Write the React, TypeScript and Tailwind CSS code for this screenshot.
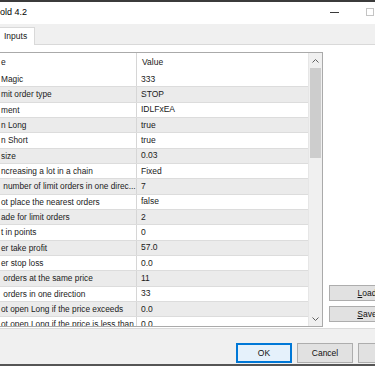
import React from "react";

const rows: [string, string][] = [
  ["Magic", "333"],
  ["mit order type", "STOP"],
  ["ment", "IDLFxEA"],
  ["n Long", "true"],
  ["n Short", "true"],
  ["size", "0.03"],
  ["ncreasing a lot in a chain", "Fixed"],
  [" number of limit orders in one direc...", "7"],
  ["ot place the nearest orders", "false"],
  ["ade for limit orders", "2"],
  ["t in points", "0"],
  ["er take profit", "57.0"],
  ["er stop loss", "0.0"],
  [" orders at the same price", "11"],
  [" orders in one direction", "33"],
  ["ot open Long if the price exceeds", "0.0"],
  ["ot open Long if the price is less than", "0.0"],
];

function Chevron({ down }: { down?: boolean }) {
  return (
    <svg width="7" height="4" viewBox="0 0 7 4">
      <polyline
        points={down ? "0.5,0.5 3.5,3.5 6.5,0.5" : "0.5,3.5 3.5,0.5 6.5,3.5"}
        fill="none"
        stroke="#606060"
        strokeWidth="1"
      />
    </svg>
  );
}

function Btn({
  children,
  focused,
  className = "",
}: {
  children: React.ReactNode;
  focused?: boolean;
  className?: string;
}) {
  return (
    <div
      className={`flex shrink-0 items-center justify-center border text-[8.5px] text-[#111] ${
        focused
          ? "border-[#0078d7] bg-[#e5f1fb] shadow-[inset_0_0_0_1px_#0078d7]"
          : "border-[#adadad] bg-[#e1e1e1]"
      } ${className}`}
    >
      {children}
    </div>
  );
}

export default function App() {
  return (
    <div
      className="flex h-[366px] w-[375px] flex-col overflow-hidden bg-[#f0f0f0] text-[#1a1a1a]"
      style={{ fontFamily: '"Liberation Sans", Arial, sans-serif' }}
    >
      {/* title bar */}
      <div className="flex h-[24px] shrink-0 border-t-2 border-[#3b3b3b] bg-white">
        <span className="self-center whitespace-nowrap text-[9px] text-black">old 4.2</span>
        <div className="flex-1" />
        <div className="mt-[10px] h-px w-[9px] bg-[#3a3a3a]" />
        <div className="ml-[27px] mt-[6px] h-[8px] w-[8px] border border-[#c4c4c4]" />
        <div className="w-px" />
      </div>

      {/* tabs */}
      <div className="flex h-[21px] shrink-0 items-end border-b border-[#d9d9d9] bg-[#f0f0f0]">
        <div className="-mb-px flex h-[18px] w-[35px] items-center border-r border-t border-[#d9d9d9] bg-white pl-[4px] text-[8.5px]">
          Inputs
        </div>
      </div>

      {/* panel */}
      <div className="flex h-[284px] shrink-0 border-b border-[#dadada] bg-white pt-[7px]">
        <div className="flex h-[275px] w-[323px] shrink-0 border border-l-0 border-[#aaaaaa]">
          <div className="flex w-[308px] flex-col overflow-hidden text-[8.5px]">
            <div className="flex h-[19px] shrink-0 items-center bg-white">
              <div className="w-[137px] shrink-0 border-r border-[#d6d6d6] pl-[1px] leading-[19px]">e</div>
              <div className="pl-[5px]">Value</div>
            </div>
            {rows.map(([n, v], i) => (
              <div
                key={i}
                className={`flex h-[15.33px] shrink-0 items-center border-b border-[#dcdcdc] ${
                  i % 2 ? "bg-[#ebebeb]" : "bg-white"
                }`}
              >
                <div className="flex h-full w-[137px] shrink-0 items-center whitespace-pre border-r border-[#d6d6d6] pl-[1px] text-[8.3px]">
                  {n}
                </div>
                <div className="pl-[4px]">{v}</div>
              </div>
            ))}
          </div>
          <div className="flex w-[14px] flex-col border-l border-[#e6e6e6] bg-[#f0f0f0]">
            <div className="flex h-[15px] items-center justify-center">
              <Chevron />
            </div>
            <div className="mx-px h-[90px] bg-[#cdcdcd]" />
            <div className="flex-1" />
            <div className="flex h-[15px] items-center justify-center">
              <Chevron down />
            </div>
          </div>
        </div>
        <div className="ml-[6px] flex flex-col gap-[5px] pt-[233px]">
          <Btn className="h-[16px] w-[76px]">
            <span>
              <span className="underline">L</span>oad
            </span>
          </Btn>
          <Btn className="h-[16px] w-[76px]">
            <span>
              <span className="underline">S</span>ave
            </span>
          </Btn>
        </div>
      </div>

      {/* bottom buttons */}
      <div className="flex flex-1 gap-[5px] border-b-2 border-[#555] pl-[236px] pt-[14px]">
        <Btn focused className="h-[20px] w-[56px]">OK</Btn>
        <Btn className="h-[20px] w-[56px]">Cancel</Btn>
        <Btn className="h-[20px] w-[56px]">Reset</Btn>
      </div>
    </div>
  );
}
